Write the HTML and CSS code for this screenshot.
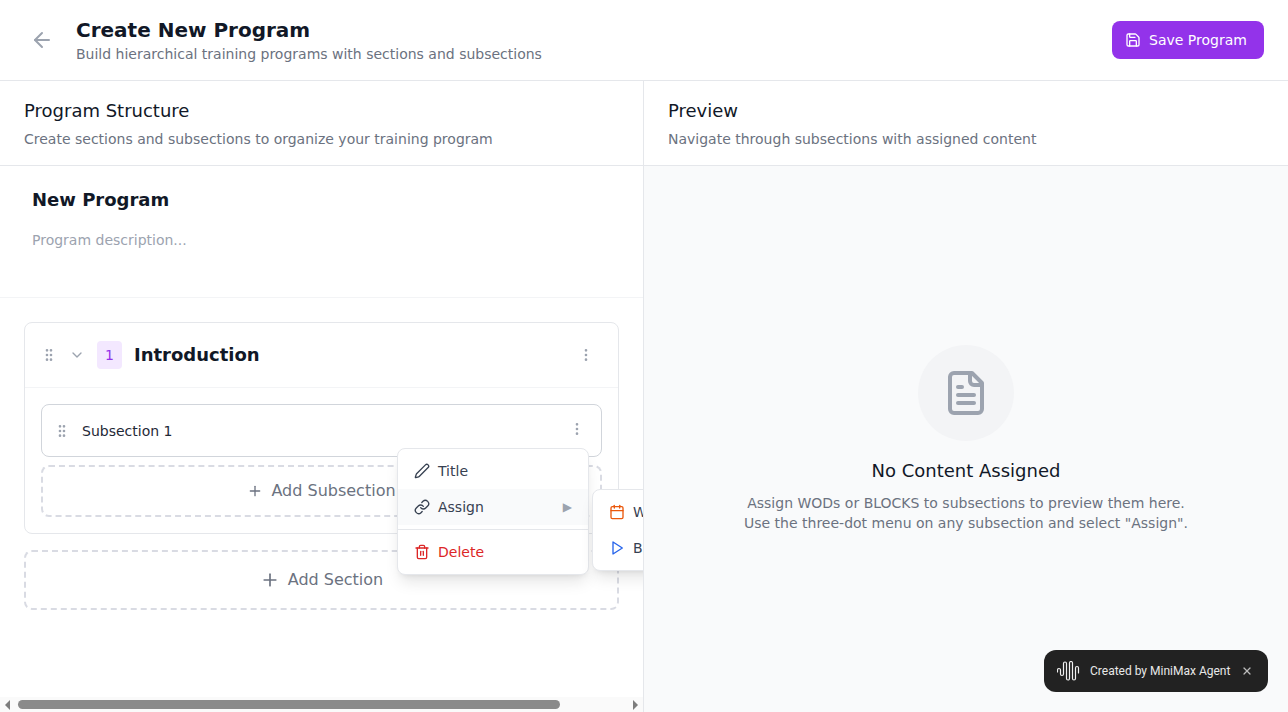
FILE: index.html
```html
<!DOCTYPE html>
<html lang="en">
<head>
  <meta charset="utf-8">
  <title>Create New Program</title>
  <link rel="stylesheet" href="styles.css">
</head>
<body>
  <div class="app">
    <header class="topbar">
      <div class="topbar-left">
        <button class="back-btn">
          <svg class="icon-24" viewBox="0 0 24 24"><path d="m12 19-7-7 7-7"/><path d="M19 12H5"/></svg>
        </button>
        <div>
          <h1>Create New Program</h1>
          <p class="muted">Build hierarchical training programs with sections and subsections</p>
        </div>
      </div>
      <button class="save-btn">
        <svg class="icon-16" viewBox="0 0 24 24"><path d="M15.2 3a2 2 0 0 1 1.4.6l3.8 3.8a2 2 0 0 1 .6 1.4V19a2 2 0 0 1-2 2H5a2 2 0 0 1-2-2V5a2 2 0 0 1 2-2z"/><path d="M17 21v-7a1 1 0 0 0-1-1H8a1 1 0 0 0-1 1v7"/><path d="M7 3v4a1 1 0 0 0 1 1h7"/></svg>
        Save Program
      </button>
    </header>

    <main class="columns">
      <section class="left">
        <div class="panel-head">
          <h2>Program Structure</h2>
          <p class="muted">Create sections and subsections to organize your training program</p>
        </div>
        <div class="program-info">
          <div class="program-name">New Program</div>
          <div class="program-desc">Program description...</div>
        </div>
        <div class="sections">
          <div class="section-card">
            <div class="section-head">
              <svg class="icon-16 grip" viewBox="0 0 24 24"><circle cx="9" cy="12" r="1"/><circle cx="9" cy="5" r="1"/><circle cx="9" cy="19" r="1"/><circle cx="15" cy="12" r="1"/><circle cx="15" cy="5" r="1"/><circle cx="15" cy="19" r="1"/></svg>
              <svg class="icon-16 chevron" viewBox="0 0 24 24"><path d="m6 9 6 6 6-6"/></svg>
              <span class="badge">1</span>
              <span class="section-title">Introduction</span>
              <svg class="icon-16 kebab" viewBox="0 0 24 24"><circle cx="12" cy="12" r="1"/><circle cx="12" cy="5" r="1"/><circle cx="12" cy="19" r="1"/></svg>
            </div>
            <div class="section-body">
              <div class="subsection">
                <svg class="icon-16 grip" viewBox="0 0 24 24"><circle cx="9" cy="12" r="1"/><circle cx="9" cy="5" r="1"/><circle cx="9" cy="19" r="1"/><circle cx="15" cy="12" r="1"/><circle cx="15" cy="5" r="1"/><circle cx="15" cy="19" r="1"/></svg>
                <span class="subsection-title">Subsection 1</span>
                <svg class="icon-16 kebab sub-kebab" viewBox="0 0 24 24"><circle cx="12" cy="12" r="1"/><circle cx="12" cy="5" r="1"/><circle cx="12" cy="19" r="1"/></svg>
              </div>
              <button class="add-btn add-sub">
                <svg class="icon-16" viewBox="0 0 24 24"><path d="M5 12h14"/><path d="M12 5v14"/></svg>
                Add Subsection
              </button>
            </div>
          </div>
          <button class="add-btn add-section">
            <svg class="icon-20" viewBox="0 0 24 24"><path d="M5 12h14"/><path d="M12 5v14"/></svg>
            Add Section
          </button>
        </div>

        <div class="menu main-menu">
          <div class="menu-item">
            <svg class="icon-16" viewBox="0 0 24 24"><path d="M21.17 6.81a1 1 0 0 0-3.99-3.99L3.84 16.17a2 2 0 0 0-.5.83l-1.32 4.35a.5.5 0 0 0 .62.62l4.35-1.32a2 2 0 0 0 .83-.5z"/></svg>
            Title
          </div>
          <div class="menu-item active">
            <svg class="icon-16" viewBox="0 0 24 24"><path d="M10 13a5 5 0 0 0 7.54.54l3-3a5 5 0 0 0-7.07-7.07l-1.72 1.71"/><path d="M14 11a5 5 0 0 0-7.54-.54l-3 3a5 5 0 0 0 7.07 7.07l1.71-1.71"/></svg>
            Assign
            <span class="caret">▶</span>
          </div>
          <div class="menu-sep"></div>
          <div class="menu-item danger">
            <svg class="icon-16" viewBox="0 0 24 24"><path d="M3 6h18"/><path d="M19 6v14a2 2 0 0 1-2 2H7a2 2 0 0 1-2-2V6"/><path d="M8 6V4a2 2 0 0 1 2-2h4a2 2 0 0 1 2 2v2"/><path d="M10 11v6"/><path d="M14 11v6"/></svg>
            Delete
          </div>
        </div>
        <div class="menu sub-menu">
          <div class="menu-item">
            <svg class="icon-16 orange" viewBox="0 0 24 24"><path d="M8 2v4"/><path d="M16 2v4"/><rect width="18" height="18" x="3" y="4" rx="2"/><path d="M3 10h18"/></svg>
            WOD
          </div>
          <div class="menu-item">
            <svg class="icon-16 blue" viewBox="0 0 24 24"><path d="M6 3l14 9-14 9z"/></svg>
            BLOCK
          </div>
        </div>

        <div class="scrollbar">
          <span class="arrow arrow-left"></span>
          <div class="track"><div class="thumb"></div></div>
          <span class="arrow arrow-right"></span>
        </div>
      </section>

      <section class="right">
        <div class="panel-head">
          <h2>Preview</h2>
          <p class="muted">Navigate through subsections with assigned content</p>
        </div>
        <div class="empty">
          <div class="empty-circle">
            <svg class="doc-icon" viewBox="0 0 24 24"><path d="M15 2H6a2 2 0 0 0-2 2v16a2 2 0 0 0 2 2h12a2 2 0 0 0 2-2V7z"/><path d="M14 2v4a2 2 0 0 0 2 2h4"/><path d="M10 9H8"/><path d="M16 13H8"/><path d="M16 17H8"/></svg>
          </div>
          <h3>No Content Assigned</h3>
          <p>Assign WODs or BLOCKS to subsections to preview them here.<br>Use the three-dot menu on any subsection and select "Assign".</p>
        </div>
      </section>
    </main>
  </div>

  <div class="toast">
    <svg class="wave" viewBox="0 0 25 20"><path d="M.5 11V9a1.500 1.500 0 0 1 3 0v4a1.500 1.500 0 0 0 3 0V2.500a1.500 1.500 0 0 1 3 0v15a1.500 1.500 0 0 0 3 0V2a1.500 1.500 0 0 1 3 0v15.500a1.500 1.500 0 0 0 3 0V7a1.500 1.500 0 0 1 3 0v5"/></svg>
    <span>Created by MiniMax Agent</span>
    <svg class="toast-close" viewBox="0 0 8 8"><path d="M1 1l6 6"/><path d="M7 1 1 7"/></svg>
  </div>
</body>
</html>
```

FILE: styles.css
```css
* {
  box-sizing: border-box;
}
html, body {
  margin: 0;
  height: 100%;
  overflow: hidden;
}
body {
  font-family: "DejaVu Sans", sans-serif;
  color: #111827;
  background: #fff;
}
h1, h2, h3, p {
  margin: 0;
  font-weight: inherit;
}
button {
  font-family: inherit;
  background: none;
  border: 0;
  padding: 0;
}
svg {
  fill: none;
  stroke: currentColor;
  stroke-width: 2;
  stroke-linecap: round;
  stroke-linejoin: round;
  flex-shrink: 0;
}
.icon-16 {
  width: 16px;
  height: 16px;
}
.icon-20 {
  width: 20px;
  height: 20px;
}
.icon-24 {
  width: 24px;
  height: 24px;
}
.muted {
  font-size: 14px;
  line-height: 20px;
  color: #6b7280;
}
.app {
  height: 712px;
  display: flex;
  flex-direction: column;
}
.topbar {
  height: 81px;
  flex-shrink: 0;
  display: flex;
  align-items: center;
  justify-content: space-between;
  padding: 0 24px;
  border-bottom: 1px solid #e5e7eb;
}
.topbar-left {
  display: flex;
  align-items: center;
  gap: 16px;
}
.back-btn {
  width: 36px;
  height: 36px;
  display: flex;
  align-items: center;
  justify-content: center;
  color: #9ca3af;
}
h1 {
  font-size: 20px;
  line-height: 28px;
  font-weight: 700;
}
.save-btn {
  width: 152px;
  height: 38px;
  display: flex;
  align-items: center;
  gap: 8px;
  padding-left: 13px;
  border-radius: 8px;
  background: #9333ea;
  color: #fff;
  font-size: 14px;
}
.columns {
  flex: 1;
  display: flex;
  min-height: 0;
}
.left {
  position: relative;
  width: 644px;
  flex-shrink: 0;
  overflow: hidden;
  border-right: 1px solid #e5e7eb;
}
.right {
  flex: 1;
  display: flex;
  flex-direction: column;
  background: #f9fafb;
}
.panel-head {
  height: 85px;
  padding: 16px 24px 0;
  background: #fff;
  border-bottom: 1px solid #e5e7eb;
}
h2 {
  font-size: 18px;
  line-height: 28px;
  margin-bottom: 4px;
}
.program-info {
  height: 132px;
  padding: 20px 32px 0;
  border-bottom: 1px solid #f3f4f6;
}
.program-name {
  font-size: 18px;
  line-height: 28px;
  font-weight: 700;
}
.program-desc {
  margin-top: 16px;
  font-size: 14px;
  line-height: 20px;
  color: #9ca3af;
}
.sections {
  padding: 24px 24px 0;
  display: flex;
  flex-direction: column;
  gap: 16px;
}
.section-card {
  border: 1px solid #e5e7eb;
  border-radius: 8px;
  background: #fff;
}
.section-head {
  height: 65px;
  display: flex;
  align-items: center;
  padding: 0 24px 0 16px;
  border-bottom: 1px solid #f3f4f6;
}
.grip {
  color: #9ca3af;
}
.chevron {
  color: #9ca3af;
  margin-left: 12px;
}
.badge {
  width: 25px;
  height: 28px;
  margin-left: 12px;
  display: flex;
  align-items: center;
  justify-content: center;
  border-radius: 4px;
  background: #f3e8ff;
  color: #9333ea;
  font-size: 14px;
}
.section-title {
  margin-left: 12px;
  margin-bottom: 1px;
  flex: 1;
  font-size: 18px;
  line-height: 28px;
  font-weight: 700;
}
.kebab {
  color: #9ca3af;
}
.sub-kebab {
  margin-bottom: 4px;
}
.section-body {
  padding: 16px;
  display: flex;
  flex-direction: column;
  gap: 8px;
}
.subsection {
  height: 53px;
  display: flex;
  align-items: center;
  padding: 0 16px 0 12px;
  border: 1px solid #d1d5db;
  border-radius: 8px;
}
.subsection-title {
  flex: 1;
  margin-left: 12px;
  font-size: 14px;
  color: #1f2937;
}
.add-btn {
  display: flex;
  align-items: center;
  justify-content: center;
  gap: 8px;
  border: 2px dashed #d9dbe3;
  border-radius: 8px;
  color: #6b7280;
  font-size: 16px;
  line-height: 24px;
}
.add-sub {
  height: 52px;
  padding-bottom: 1px;
}
.add-section {
  height: 60px;
  padding-bottom: 1px;
}
.menu {
  position: absolute;
  background: #fff;
  border: 1px solid #e5e7eb;
  border-radius: 8px;
  box-shadow: 0 10px 15px -3px rgba(0, 0, 0, .1), 0 4px 6px -4px rgba(0, 0, 0, .1);
  padding: 4px 0;
}
.main-menu {
  left: 397px;
  top: 367px;
  width: 192px;
}
.sub-menu {
  left: 592px;
  top: 408px;
  width: 160px;
}
.menu-item {
  height: 36px;
  display: flex;
  align-items: center;
  gap: 8px;
  padding: 0 16px;
  font-size: 14px;
  color: #374151;
}
.menu-item.active {
  background: #f9fafb;
}
.menu-item.danger {
  color: #dc2626;
}
.caret {
  margin-left: auto;
  font-size: 12px;
  color: #9ca3af;
}
.menu-sep {
  height: 1px;
  margin: 4px 0;
  background: #e5e7eb;
}
.orange {
  color: #ea580c;
}
.blue {
  color: #2563eb;
}
.scrollbar {
  position: absolute;
  left: 0;
  right: 0;
  bottom: 0;
  height: 15px;
  display: flex;
  align-items: center;
  background: #fafafa;
}
.track {
  flex: 1;
  height: 9px;
  padding: 0 0 0 3px;
}
.thumb {
  width: 542px;
  height: 9px;
  border-radius: 5px;
  background: #8a8a8a;
}
.arrow {
  width: 15px;
  height: 15px;
  flex-shrink: 0;
  display: flex;
  align-items: center;
  justify-content: center;
}
.arrow::before {
  content: "";
  border-top: 5px solid transparent;
  border-bottom: 5px solid transparent;
}
.arrow-left::before {
  border-right: 5px solid #7d7d7d;
}
.arrow-right::before {
  border-left: 5px solid #7d7d7d;
}
.empty {
  flex: 1;
  display: flex;
  flex-direction: column;
  align-items: center;
  padding-top: 179px;
}
.empty-circle {
  width: 96px;
  height: 96px;
  border-radius: 50%;
  background: #f3f4f6;
  display: flex;
  align-items: center;
  justify-content: center;
  color: #9ca3af;
}
.doc-icon {
  width: 48px;
  height: 48px;
}
h3 {
  margin-top: 16px;
  font-size: 18px;
  line-height: 28px;
}
.empty p {
  margin-top: 8px;
  font-size: 14px;
  line-height: 20px;
  color: #6b7280;
  text-align: center;
}
.toast {
  position: fixed;
  right: 20px;
  bottom: 20px;
  width: 224px;
  height: 42px;
  display: flex;
  align-items: center;
  padding: 0 17px 0 13px;
  gap: 8px;
  border-radius: 12px;
  background: #222;
  color: #e8e8e8;
  font-family: Roboto, sans-serif;
  font-size: 12px;
}
.wave {
  width: 25px;
  height: 20px;
  stroke-width: 1.2;
  color: #f0f0f0;
}
.toast-close {
  margin-left: auto;
  width: 8px;
  height: 8px;
  stroke-width: 1.2;
  color: #bbb;
}
```
